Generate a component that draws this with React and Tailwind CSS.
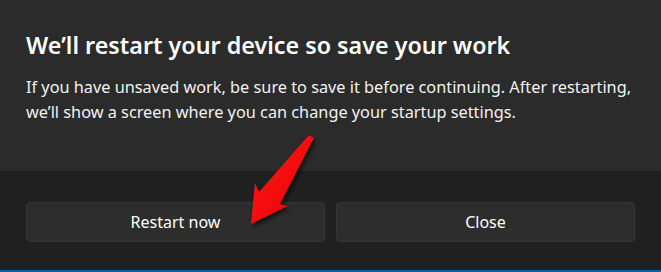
import React from 'react';

function Arrow() {
  return (
    <svg
      className="absolute left-0 top-0 pointer-events-none"
      width="661"
      height="272"
      viewBox="0 0 661 272"
      style={{ filter: 'drop-shadow(2px 3px 2px rgba(0,0,0,0.6))' }}
    >
      <defs>
        <linearGradient id="arrowFill" x1="0" y1="0" x2="1" y2="1">
          <stop offset="0" stopColor="#ff1a1a" />
          <stop offset="1" stopColor="#e80000" />
        </linearGradient>
      </defs>
      <polygon
        points="309,135 314,138 280,204 288,206 251,224 255,183 259,192"
        fill="url(#arrowFill)"
      />
    </svg>
  );
}

export default function App() {
  return (
    <div className="relative w-[661px] h-[272px] overflow-hidden bg-[#202020] font-['Noto_Sans',sans-serif] text-white">
      <div className="h-[171px] bg-[#2b2b2b] pl-[26px] pr-[14px] pt-[30px]">
        <h1 className="text-[23.3px] leading-[30px] font-semibold">
          We’ll restart your device so save your work
        </h1>
        <p className="mt-[15px] text-[16.3px] leading-[25px] text-[#f2f2f2]">
          If you have unsaved work, be sure to save it before continuing. After restarting, we’ll show a screen where you can change your startup settings.
        </p>
      </div>
      <div className="flex gap-[11px] px-[26px] pt-[31px]">
        <button className="flex-1 h-[40px] rounded-[4px] bg-[#2d2d2d] border border-[#353535] text-[16px] text-white">
          Restart now
        </button>
        <button className="flex-1 h-[40px] rounded-[4px] bg-[#2d2d2d] border border-[#353535] text-[16px] text-white">
          Close
        </button>
      </div>
      <div className="absolute left-0 right-0 bottom-0 h-[2px] bg-[#0b5ea8]" />
      <Arrow />
    </div>
  );
}
